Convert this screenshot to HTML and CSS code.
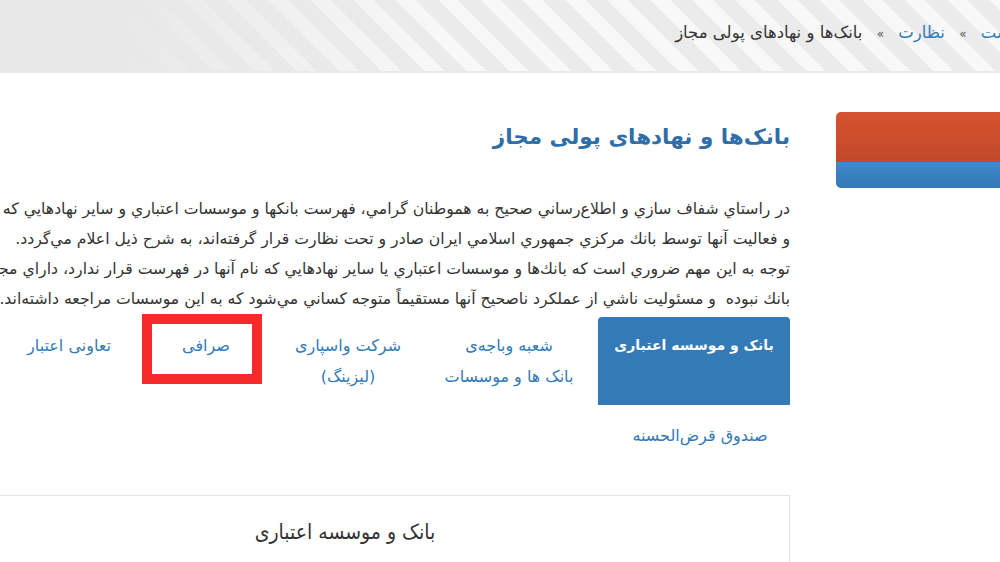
FILE: index.html
```html
<!DOCTYPE html>
<html lang="fa">

<head>
    <meta charset="utf-8">
    <link rel="stylesheet" href="styles.css">
</head>

<body>
    <div class="header">
        <div class="breadcrumb" dir="rtl">
            <a href="#">صفحه نخست</a>
            <span class="sep">»</span>
            <a href="#">نظارت</a>
            <span class="sep">»</span>
            <span>بانک‌ها و نهادهای پولی مجاز</span>
        </div>
    </div>

    <div class="page" dir="rtl">
        <div class="sidebar">
            <div class="side-menu">
                <div class="side-top"></div>
                <div class="side-bottom"></div>
            </div>
        </div>

        <div class="main">
            <h1 class="title">بانک‌ها و نهادهای پولی مجاز</h1>

            <div class="intro">
                <p class="line">در راستاي شفاف سازي و اطلاع‌رساني صحيح به هموطنان گرامي، فهرست بانكها و موسسات اعتباري و ساير نهادهايي كه مجوز تاسيس</p>
                <p class="line">و فعاليت آنها توسط بانك مركزي جمهوري اسلامي ايران صادر و تحت نظارت قرار گرفته‌اند، به شرح ذيل اعلام مي‌گردد.</p>
                <p class="line">توجه به اين مهم ضروري است كه بانك‌ها و موسسات اعتباري يا ساير نهادهايي كه نام آنها در فهرست قرار ندارد، داراي مجوز از اين</p>
                <p class="line">بانك نبوده &nbsp;و مسئوليت ناشي از عملكرد ناصحيح آنها مستقيماً متوجه كساني مي‌شود كه به اين موسسات مراجعه داشته‌اند.</p>
            </div>

            <ul class="tabs">
                <li class="tab active tab-1">بانک و موسسه اعتباری</li>
                <li class="tab tab-2">شعبه وباجه‌ی<br>بانک ها و موسسات</li>
                <li class="tab tab-3">شرکت واسپاری<br>(لیزینگ)</li>
                <li class="tab tab-4">صرافی<span class="marker"></span></li>
                <li class="tab tab-5">تعاونی اعتبار</li>
                <li class="tab tab-6">صندوق قرض‌الحسنه</li>
            </ul>

            <div class="panel">
                <h2 class="panel-title">بانک و موسسه اعتباری</h2>
            </div>
        </div>
    </div>
</body>

</html>
```

FILE: styles.css
```css
/* General Styling */
body {
    margin: 0;
    font-family: "DejaVu Sans", sans-serif;
    background-color: white;
    color: #333;
    overflow: hidden;
    height: 562px;
}

a {
    color: #337ab7;
    text-decoration: none;
}

/* Striped header with breadcrumb */
.header {
    height: 71px;
    border-bottom: 2px solid #e9e9e9;
    background:
        linear-gradient(to right, #e8e8e8 0%, #e8e8e8 12%, rgba(232, 232, 232, 0) 45%),
        repeating-linear-gradient(45deg, #f8f8f8 0, #f8f8f8 14px, #ebebeb 14px, #ebebeb 30px);
}

.breadcrumb {
    width: 1174px;
    margin-left: -100px;
    box-sizing: border-box;
    padding: 23px 0 0 0;
    font-size: 16.5px;
    white-space: nowrap;
    color: #333;
}

.breadcrumb .sep {
    color: #555;
    font-size: 12px;
    margin: 0 9px;
}

/* Page columns */
.page {
    display: flex;
    width: 1150px;
    margin-left: -100px;
    padding-top: 39px;
}

.sidebar {
    width: 200px;
    margin-right: 14px;
    margin-left: 46px;
}

.side-menu {
    border-radius: 5px;
    overflow: hidden;
}

.side-top {
    height: 50px;
    background: linear-gradient(#d6532f, #c2482a);
}

.side-bottom {
    height: 26px;
    background: linear-gradient(#4189cb, #3478b8);
}

.main {
    width: 890px;
}

.title {
    margin: 0;
    font-size: 21.5px;
    font-weight: bold;
    color: #2f6ea8;
    line-height: 50px;
}

/* Intro paragraph */
.intro {
    margin-top: 32px;
}

.line {
    margin: 0;
    white-space: nowrap;
    font-size: 15.7px;
    line-height: 30px;
    color: #333;
}

/* Category tabs */
.tabs {
    list-style: none;
    margin: 3px 0 0 0;
    padding: 0;
    width: 790px;
    display: flex;
    flex-wrap: wrap;
    gap: 2px 4px;
}

.tab {
    position: relative;
    box-sizing: border-box;
    text-align: center;
    font-size: 16px;
    line-height: 31px;
    color: #337ab7;
    padding-top: 13px;
    height: 88px;
}

.tab.active {
    background: #337ab7;
    color: white;
    font-weight: bold;
    font-size: 14px;
    border-radius: 4px 4px 0 0;
}

.tab-1 { width: 192px; }
.tab-2 { width: 170px; }
.tab-3 { width: 144px; }
.tab-4 { width: 132px; }
.tab-5 { width: 134px; }
.tab-6 { width: 180px; height: 60px; }

/* Red annotation box around one tab */
.marker {
    position: absolute;
    top: -3px;
    left: 2px;
    width: 100px;
    height: 50px;
    border: 10px solid #f52b2b;
}

/* Result panel */
.panel {
    margin-top: 28px;
    border: 1px solid #e2e2e2;
    height: 200px;
}

.panel-title {
    margin: 0;
    padding-top: 24px;
    text-align: center;
    font-family: "DejaVu Sans Condensed", "DejaVu Sans", sans-serif;
    font-size: 21px;
    font-weight: normal;
    color: #333;
}
```
